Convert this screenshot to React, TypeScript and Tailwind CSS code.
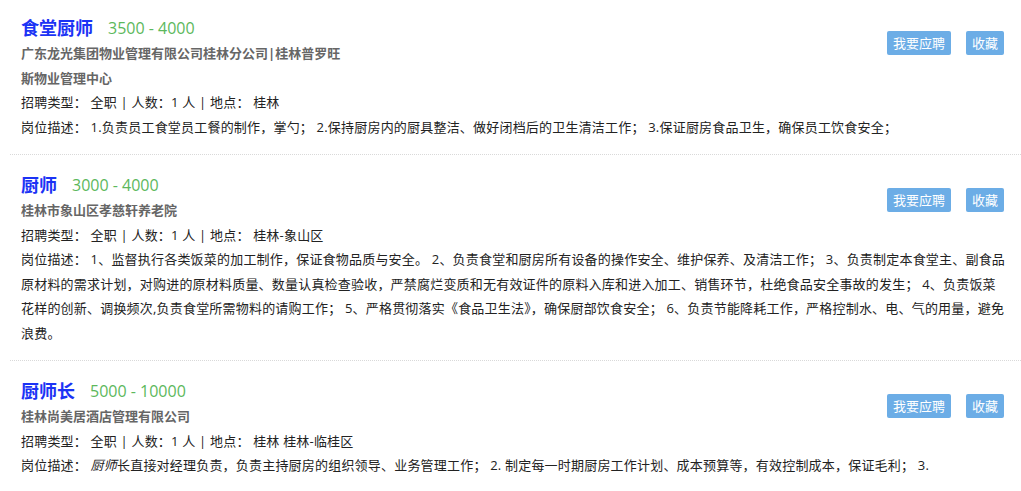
import React from 'react';

type Job = {
  title: string;
  salary: string;
  company: string;
  location: string;
  desc: React.ReactNode;
};

const jobs: Job[] = [
  {
    title: '食堂厨师',
    salary: '3500 - 4000',
    company: '广东龙光集团物业管理有限公司桂林分公司|桂林普罗旺斯物业管理中心',
    location: '桂林',
    desc: '1.负责员工食堂员工餐的制作，掌勺； 2.保持厨房内的厨具整洁、做好闭档后的卫生清洁工作； 3.保证厨房食品卫生，确保员工饮食安全；',
  },
  {
    title: '厨师',
    salary: '3000 - 4000',
    company: '桂林市象山区孝慈轩养老院',
    location: '桂林-象山区',
    desc: '1、监督执行各类饭菜的加工制作，保证食物品质与安全。 2、负责食堂和厨房所有设备的操作安全、维护保养、及清洁工作； 3、负责制定本食堂主、副食品原材料的需求计划，对购进的原材料质量、数量认真检查验收，严禁腐烂变质和无有效证件的原料入库和进入加工、销售环节，杜绝食品安全事故的发生； 4、负责饭菜花样的创新、调换频次,负责食堂所需物料的请购工作； 5、严格贯彻落实《食品卫生法》，确保厨部饮食安全； 6、负责节能降耗工作，严格控制水、电、气的用量，避免浪费。',
  },
  {
    title: '厨师长',
    salary: '5000 - 10000',
    company: '桂林尚美居酒店管理有限公司',
    location: '桂林 桂林-临桂区',
    desc: (
      <>
        <em>厨师</em>长直接对经理负责，负责主持厨房的组织领导、业务管理工作； 2. 制定每一时期厨房工作计划、成本预算等，有效控制成本，保证毛利； 3.
      </>
    ),
  },
];

const JobCard: React.FC<{ job: Job; first?: boolean }> = ({ job, first }) => (
  <div
    className={`ml-[10px] pl-[11px] pr-[15px] pb-[15px] border-b border-dotted border-[#d9d9d9] ${
      first ? 'pt-[15px]' : 'pt-[17px]'
    }`}
  >
    <div className="flex justify-between">
      <div>
        <div className="flex items-center h-[26px]">
          <span className="text-[18px] font-bold text-[#1b33f5]">{job.title}</span>
          <span className="ml-[15px] text-[16px] text-[#5cb85c]">{job.salary}</span>
        </div>
        <div className="w-[320px] text-[13px] font-bold text-[#666] leading-[24.5px]">{job.company}</div>
        <div className="text-[13px] leading-[24.5px] text-[#222] tracking-[0.2px]">
          招聘类型： 全职 | 人数：1 人 | 地点： {job.location}
        </div>
      </div>
      <div className="flex gap-[15px] mt-4 mr-[2px] items-start">
        <button className="h-[24px] px-[6px] rounded-[2px] bg-[#6cade6] text-white text-[13px] leading-[24px]">
          我要应聘
        </button>
        <button className="h-[24px] px-[6px] rounded-[2px] bg-[#6cade6] text-white text-[13px] leading-[24px]">
          收藏
        </button>
      </div>
    </div>
    <div className="text-[13px] leading-[24.5px] text-[#222] tracking-[0.2px]">岗位描述： {job.desc}</div>
  </div>
);

const App: React.FC = () => {
  return (
    <div
      className="min-h-screen bg-white overflow-hidden"
      style={{ fontFamily: '"Open Sans", "Noto Sans CJK SC", sans-serif' }}
    >
      {jobs.map((job, i) => (
        <JobCard key={job.title} job={job} first={i === 0} />
      ))}
    </div>
  );
};

export default App;
